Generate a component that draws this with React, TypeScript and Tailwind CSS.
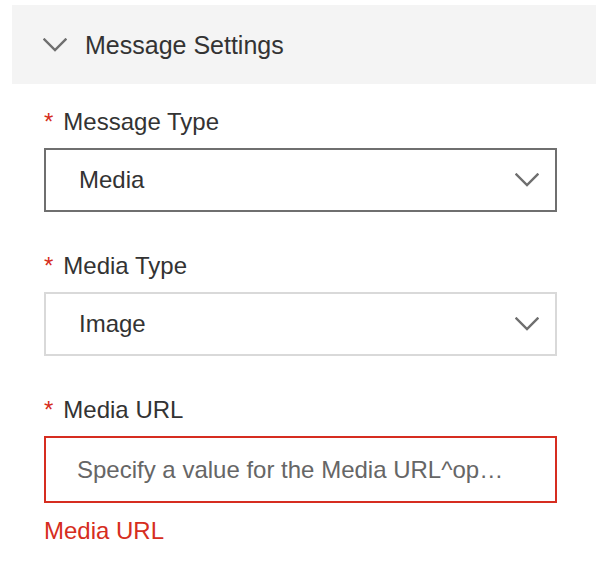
const font = { fontFamily: '"Liberation Sans", Arial, sans-serif' };

function Chevron({ className }: { className?: string }) {
  return (
    <svg className={className} width="24" height="14" viewBox="0 0 24 14" fill="none">
      <path d="M1.5 1.5 L12 12 L22.5 1.5" stroke="#6f6f6f" strokeWidth="2.4" strokeLinecap="square" />
    </svg>
  );
}

function Label({ text }: { text: string }) {
  return (
    <div className="flex items-center h-[32px] text-[24px] leading-[32px] text-[#333]">
      <span className="text-[#d62d20] mr-[10px]">*</span>
      <span>{text}</span>
    </div>
  );
}

function Select({ value, active }: { value: string; active?: boolean }) {
  return (
    <div
      className={`mt-[10px] h-[64px] flex items-center justify-between pl-[33px] pr-[16px] bg-white border-2 ${
        active ? "border-[#6f6f6f]" : "border-[#d9d9d9]"
      }`}
    >
      <span className="text-[24px] leading-[32px] text-[#333]">{value}</span>
      <Chevron />
    </div>
  );
}

export default function App() {
  return (
    <div className="bg-white w-[596px] h-[572px] pt-[5px] pl-[12px]" style={font}>
      {/* Section header */}
      <div className="h-[79px] bg-[#f4f4f4] flex items-center pl-[31px]">
        <Chevron />
        <span className="ml-[18px] text-[25px] leading-[32px] text-[#333] mt-[1px]">Message Settings</span>
      </div>

      <div className="pl-[32px] pr-[39px]">
        <div className="pt-[22px]">
          <Label text="Message Type" />
          <Select value="Media" active />
        </div>

        <div className="pt-[38px]">
          <Label text="Media Type" />
          <Select value="Image" />
        </div>

        <div className="pt-[38px]">
          <Label text="Media URL" />
          <div className="mt-[10px] h-[67px] flex items-center pl-[31px] pr-[20px] bg-white border-2 border-[#d62d20]">
            <span className="whitespace-nowrap text-[24px] leading-[32px] text-[#666]">
              Specify a value for the Media URL^op…
            </span>
          </div>
          <div className="mt-[12px] text-[24px] leading-[32px] text-[#d62d20]">Media URL</div>
        </div>
      </div>
    </div>
  );
}
